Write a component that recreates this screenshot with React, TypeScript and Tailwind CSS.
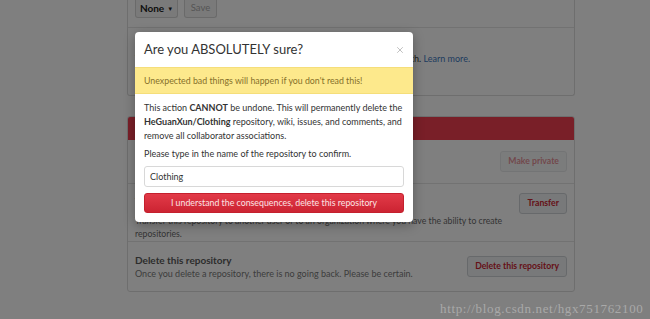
import { X } from "lucide-react";

const sans = { fontFamily: 'Lato, "Noto Sans", sans-serif' };

function PageButton({ label, tone = "danger", disabled = false }: { label: string; tone?: "danger" | "plain"; disabled?: boolean }) {
  return (
    <button
      className={
        "h-[21px] px-[7px] rounded-[3px] border border-[#cfd3d6] bg-[#f1f3f5] text-[8.7px] font-bold leading-none whitespace-nowrap " +
        (tone === "danger" ? "text-[#cb2431] " : "text-[#24292e] ") +
        (disabled ? "opacity-50" : "")
      }
    >
      {label}
    </button>
  );
}

export default function App() {
  return (
    <div className="relative w-[650px] h-[319px] overflow-hidden bg-white" style={sans}>
      {/* Settings page under the overlay */}
      <div className="ml-[127px] w-[448px]">
        <div className="border-x border-b border-[#dddddd] rounded-b-[3px]">
          <div className="h-[28px] border-b border-[#e5e5e5] px-[7px] flex gap-[6px] items-start">
            <button className="h-[18px] w-[43px] rounded-b-[3px] border border-t-0 border-[#d5d5d5] bg-[#f5f5f5] text-[10px] font-bold text-[#222] flex items-center justify-center gap-[3px]">
              None <span className="text-[6px]">▼</span>
            </button>
            <button className="h-[18px] w-[33px] rounded-b-[3px] border border-t-0 border-[#d5d5d5] bg-[#f5f5f5] text-[9.5px] text-[#aaa]">
              Save
            </button>
          </div>
          <div className="h-[67px] px-[7px] pt-[24px] text-[9px] text-[#333] whitespace-nowrap overflow-hidden">
            Your GitHub Pages site is currently being built from the gh-pages branch.{" "}
            <span className="text-[#4078c0]">Learn more.</span>
          </div>
        </div>

        <div className="mt-[20px] border border-[#dddddd] rounded-[3px] overflow-hidden">
          <div className="h-[23px] bg-[#f33f51] px-[7px] flex items-center text-[11px] font-bold text-white">
            Danger Zone
          </div>
          <div className="h-[44px] px-[7px] flex items-center justify-between border-b border-[#e5e5e5]">
            <div className="text-[9px]">
              <div className="font-bold text-[#444] text-[10px]">Make this repository private</div>
              <div className="text-[#666]">Please upgrade your plan to make this repository private.</div>
            </div>
            <PageButton label="Make private" disabled />
          </div>
          <div className="h-[58px] px-[7px] pt-[9px] flex justify-between border-b border-[#e5e5e5]">
            <div className="text-[8.7px] leading-[13px] whitespace-nowrap">
              <div className="font-bold text-[#444] text-[10px] leading-[16px]">Transfer ownership</div>
              <div className="text-[#6a6a6a] mt-[5px]">
                Transfer this repository to another user or to an organization where you have the ability to create
                <br />
                repositories.
              </div>
            </div>
            <PageButton label="Transfer" />
          </div>
          <div className="h-[49px] px-[7px] flex items-center justify-between">
            <div>
              <div className="font-bold text-[10px] leading-[14px] text-[#5a5a5a]">Delete this repository</div>
              <div className="text-[9px] leading-[14px] text-[#7a7a7a]">
                Once you delete a repository, there is no going back. Please be certain.
              </div>
            </div>
            <PageButton label="Delete this repository" />
          </div>
        </div>
      </div>

      {/* Modal backdrop */}
      <div className="absolute inset-0 bg-black/50" />

      {/* Modal */}
      <div className="absolute left-[135px] top-[32px] w-[278px] rounded-[4px] bg-white shadow-[0_3px_12px_rgba(0,0,0,0.3)] overflow-hidden">
        <div className="h-[35px] pl-[9px] pr-[8px] flex items-center justify-between">
          <span className="text-[13px] text-[#333]">Are you ABSOLUTELY sure?</span>
          <X size={10} strokeWidth={2} className="text-[#b5b5b5]" />
        </div>
        <div className="h-[27px] px-[9px] flex items-center bg-[#fde98c] border-y border-[#f5de7a] text-[8.8px] text-[#86702a]">
          Unexpected bad things will happen if you don't read this!
        </div>
        <div className="px-[9px] pt-[7px] pb-[9px] text-[9px] text-[#333] whitespace-nowrap">
          <p className="leading-[14px]">
            This action <b className="font-bold">CANNOT</b> be undone. This will permanently delete the
            <br />
            <b className="font-bold">HeGuanXun/Clothing</b> repository, wiki, issues, and comments, and
            <br />
            remove all collaborator associations.
          </p>
          <p className="leading-[14px] mt-[4px]">Please type in the name of the repository to confirm.</p>
          <div className="mt-[5px] h-[21px] rounded-[3px] border border-[#d8d8d8] flex items-center px-[5px] text-[9px] text-[#333]">
            Clothing
          </div>
          <button className="mt-[6px] w-full h-[20px] rounded-[3px] border border-[#c4202d] bg-gradient-to-b from-[#e23a48] to-[#cc2332] text-[8.8px] text-[#fbe3e5]">
            I understand the consequences, delete this repository
          </button>
        </div>
      </div>

      {/* Watermark */}
      <div
        className="absolute left-[440px] top-[299px] text-[13px] text-[#a9a9a9] tracking-[0.65px]"
        style={{ fontFamily: '"Liberation Serif", serif' }}
      >
        http://blog.csdn.net/hgx751762100
      </div>
    </div>
  );
}
